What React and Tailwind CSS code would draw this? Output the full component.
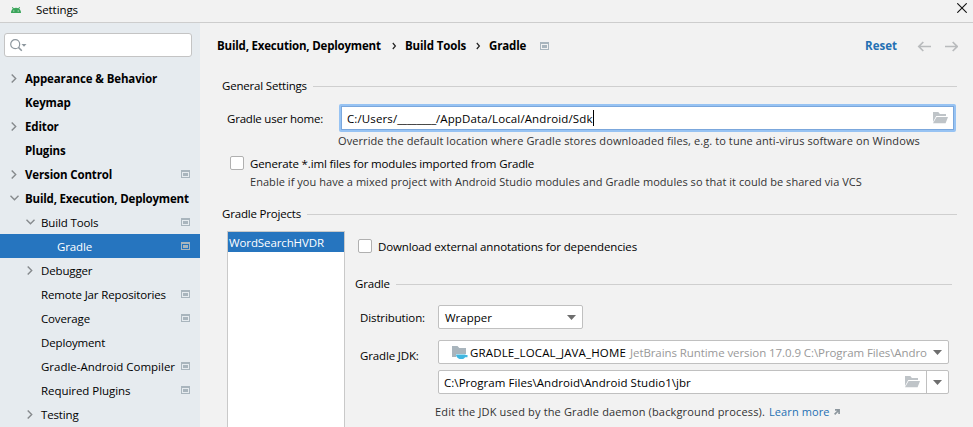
function ModuleIcon({ className = "" }) {
  return (
    <svg width="9" height="8" viewBox="0 0 9 8" shapeRendering="crispEdges" className={`shrink-0 ${className}`}>
      <path fillRule="evenodd" d="M0 0h9v8H0zM1 2v5h7V2z" fill="#a9b5bd" />
      <path d="M2 3h5v3H2z" fill="#a9b5bd" />
    </svg>
  );
}

function Chevron({ open, small }) {
  if (small) {
    return (
      <svg width="5" height="8" viewBox="0 0 5 8" fill="none" stroke="#222" strokeWidth="1.2">
        <path d="M.8 1l2.6 3L.8 7" />
      </svg>
    );
  }
  return open ? (
    <svg width="9" height="6" viewBox="0 0 9 6" fill="none" stroke="#868a8d" strokeWidth="1.4">
      <path d="M.5.7l4 4 4-4" />
    </svg>
  ) : (
    <svg width="6" height="9" viewBox="0 0 6 9" fill="none" stroke="#868a8d" strokeWidth="1.4" className="ml-px">
      <path d="M.7.5l4 4-4 4" />
    </svg>
  );
}

function FolderIcon() {
  return (
    <svg width="15" height="12" viewBox="0 0 15 12" fill="#bfc4c8" className="shrink-0">
      <path d="M0 0h5.3l1.6 2H13v2H3.2L0 10z" />
      <path d="M3.6 5H15l-2.4 6.3H0z" />
    </svg>
  );
}

function Caret() {
  return (
    <svg width="9" height="5" viewBox="0 0 9 5" fill="#6e6e6e" className="shrink-0">
      <path d="M0 0h9L4.5 5z" />
    </svg>
  );
}

function SectionTitle({ children }) {
  return (
    <div className="flex h-5 items-center gap-[6px]">
      <span className="shrink-0 tracking-[-0.19px]">{children}</span>
      <div className="h-px flex-1 bg-[#cfcfcf]" />
    </div>
  );
}

function Checkbox() {
  return <span className="size-[14px] shrink-0 rounded-[2px] border border-[#b0b0b0] bg-white" />;
}

const ITEMS = [
  { label: "Appearance & Behavior", level: 0, arrow: "closed", track: "tracking-[-0.125px]" },
  { label: "Keymap", level: 0 },
  { label: "Editor", level: 0, arrow: "closed" },
  { label: "Plugins", level: 0 },
  { label: "Version Control", level: 0, arrow: "closed", icon: true },
  { label: "Build, Execution, Deployment", level: 0, arrow: "open", track: "tracking-[-0.19px]" },
  { label: "Build Tools", level: 1, arrow: "open", icon: true },
  { label: "Gradle", level: 2, icon: true, selected: true },
  { label: "Debugger", level: 1, arrow: "closed" },
  { label: "Remote Jar Repositories", level: 1, icon: true },
  { label: "Coverage", level: 1, icon: true },
  { label: "Deployment", level: 1 },
  { label: "Gradle-Android Compiler", level: 1, icon: true, track: "tracking-[-0.01px]" },
  { label: "Required Plugins", level: 1, icon: true, track: "tracking-[-0.05px]" },
  { label: "Testing", level: 1, arrow: "closed" },
];

const INDENT = ["pl-[9px]", "pl-[25px]", "pl-[41px]"];

function Sidebar() {
  return (
    <aside className="w-[200px] shrink-0 overflow-hidden bg-[#e6ebef]">
      <div className="mt-[10px] ml-1 flex h-6 w-[188px] items-center rounded-[3px] border border-[#c4c4c4] bg-white pl-[5px]">
        <svg width="17" height="13" viewBox="0 0 17 13" fill="none" stroke="#8d979e" strokeWidth="1.2">
          <circle cx="5.2" cy="5.2" r="4.5" />
          <path d="M8.4 8.4l3.4 3.4" strokeWidth="1.5" />
          <path d="M11.5 5h5L14 7.8z" fill="#8d979e" stroke="none" />
        </svg>
      </div>
      <nav className="mt-[9px]">
        {ITEMS.map((it) => (
          <div
            key={it.label}
            className={`flex h-6 items-center pr-[10px] whitespace-nowrap ${INDENT[it.level]} ${it.level === 0 ? "font-bold" : ""} ${it.selected ? "bg-[#2675bf] text-white" : ""}`}
          >
            <span className="flex w-4 shrink-0 items-center pl-px">
              {it.arrow && <Chevron open={it.arrow === "open"} />}
            </span>
            <span className={`w-0 flex-1 pt-[2px] ${it.track || "tracking-[-0.145px]"}`}>{it.label}</span>
            {it.icon && <ModuleIcon />}
          </div>
        ))}
      </nav>
    </aside>
  );
}

function GradlePanel() {
  return (
    <div className="ml-[10px] flex-1">
      <div className="mt-[5px] ml-[3px] flex h-5 items-center gap-[6px]">
        <Checkbox />
        <span className="pt-px tracking-[-0.137px]">Download external annotations for dependencies</span>
      </div>
      <div className="mt-[18px] mr-[21px]">
        <SectionTitle>Gradle</SectionTitle>
      </div>
      <div className="mt-[11px] ml-[5px] flex h-6 items-center">
        <span className="w-[78px] pt-[2px] tracking-[-0.115px]">Distribution:</span>
        <div className="flex h-6 w-[145px] items-center justify-between rounded-[2px] border border-[#c0c0c0] bg-white pr-[6px] pl-[6px]">
          <span className="pt-[2px]">Wrapper</span>
          <Caret />
        </div>
      </div>
      <div className="mt-[11px] ml-[5px] flex h-6 items-center">
        <span className="w-[78px] pt-[7px] tracking-[-0.15px]">Gradle JDK:</span>
        <div className="flex h-6 w-[511px] items-center rounded-[2px] border border-[#c0c0c0] bg-white pl-[13px] whitespace-nowrap">
          <svg width="16" height="15" viewBox="0 0 16 15" className="shrink-0">
            <path d="M0 1h5.500l1.800 2H14v6H4v3H0z" fill="#a9b5bd" />
            <path d="M4 9.500h9.500v.5H15.500v2.200H13c-.6 1-1 1.300-2 1.800H7.500C5.500 13.300 4 11.500 4 9.500z" fill="#40b6e0" />
          </svg>
          <span className="ml-[2px] w-[160px] shrink-0 pt-px tracking-[0.15px]">GRADLE_LOCAL_JAVA_HOME</span>
          <span className="w-[303px] shrink-0 pt-px tracking-[-0.08px] text-[#999]">
            JetBrains Runtime version 17.0.9 C:\Program Files\Andro
          </span>
          <Caret />
        </div>
      </div>
      <div className="mt-[6px] ml-[83px] flex h-6 w-[511px] rounded-[2px] border border-[#c0c0c0] bg-white">
        <div className="flex flex-1 items-center justify-between pr-[6px] pl-[5px]">
          <span className="pt-[2px] tracking-[0.05px]">C:\Program Files\Android\Android Studio1\jbr</span>
          <FolderIcon />
        </div>
        <div className="flex w-[22px] items-center justify-center border-l border-[#c0c0c0]">
          <Caret />
        </div>
      </div>
      <div className="mt-[8px] ml-[80px] flex h-5 items-center text-[11px]">
        <span className="w-[334px] tracking-[0.15px] text-[#333]">
          Edit the JDK used by the Gradle daemon (background process).
        </span>
        <span className="tracking-[0.1px] text-[#2470b3]">Learn more</span>
        <svg width="6" height="6" viewBox="0 0 6 6" className="ml-1" fill="none" stroke="#8d979e" strokeWidth="1.700">
          <path d="M1 .9h4.100V5M5 1L.6 5.400" />
        </svg>
      </div>
    </div>
  );
}

function Main() {
  return (
    <main className="flex flex-1 flex-col">
      <div className="mt-[13px] mr-[15px] ml-[17px] flex h-5 items-center font-bold">
        <span className="w-[175px] tracking-[-0.19px]">Build, Execution, Deployment</span>
        <Chevron small />
        <span className="ml-[8px] w-[71px] tracking-[-0.145px]">Build Tools</span>
        <Chevron small />
        <span className="ml-2 w-[51px] tracking-[-0.145px]">Gradle</span>
        <ModuleIcon />
        <span className="ml-auto text-[#2470b3]">Reset</span>
        <svg width="41" height="11" viewBox="0 0 41 11" className="ml-5" fill="none" stroke="#b9bbbd" strokeWidth="1.700">
          <path d="M14 5.500H2M6.300 1L1.800 5.500l4.500 4.500M28 5.500h12M35.700 1l4.500 4.500-4.500 4.500" />
        </svg>
      </div>
      <div className="mt-5 mr-4 ml-[22px]">
        <SectionTitle>General Settings</SectionTitle>
      </div>
      <div className="mt-2 ml-[27px] flex h-7 items-center">
        <span className="w-[112px] pt-px tracking-[-0.21px]">Gradle user home:</span>
        <div className="h-7 w-[617px] rounded-[2px] bg-[#97c3f3] p-[2px]">
          <div className="flex h-6 items-center border border-[#7ba7dc] bg-white pr-[5px] pl-[5px]">
            <span className="pt-px tracking-[0.12px]">
              C:/Users/<span className="tracking-[-0.2px]">________</span>/AppData/Local/Android/Sdk
            </span>
            <span className="h-4 w-px bg-black" />
            <span className="ml-auto">
              <FolderIcon />
            </span>
          </div>
        </div>
      </div>
      <div className="ml-[138px] h-[18px] text-[11px] leading-[18px] tracking-[0.09px] whitespace-nowrap text-[#333]">
        Override the default location where Gradle stores downloaded files, e.g. to tune anti-virus software on Windows
      </div>
      <div className="mt-[3px] ml-[30px] flex h-5 items-center gap-[6px]">
        <Checkbox />
        <span className="pt-px tracking-[-0.15px]">Generate *.iml files for modules imported from Gradle</span>
      </div>
      <div className="ml-[50px] h-[18px] text-[11px] leading-[18px] tracking-[0.045px] whitespace-nowrap text-[#333]">
        Enable if you have a mixed project with Android Studio modules and Gradle modules so that it could be shared via VCS
      </div>
      <div className="mt-[13px] mr-4 ml-[22px]">
        <SectionTitle>Gradle Projects</SectionTitle>
      </div>
      <div className="mt-[7px] ml-[27px] flex flex-1">
        <div className="w-[118px] border border-b-0 border-[#c9c9c9] bg-white">
          <div className="flex h-5 items-center bg-[#2675bf] pt-px pl-px tracking-[-0.11px] text-white">WordSearchHVDR</div>
        </div>
        <GradlePanel />
      </div>
    </main>
  );
}

export default function App() {
  return (
    <div className="flex h-[427px] w-[973px] flex-col overflow-hidden bg-[#f2f2f2] font-['Open_Sans','Noto_Sans',sans-serif] text-[11.5px] leading-[18px] text-black">
      <header className="flex h-[23px] shrink-0 items-center border-b border-[#cdcdcd] pr-[6px] pb-[3px] pl-[11px]">
        <svg width="10" height="6" viewBox="0 0 10 6" fill="#3ba55b">
          <path
            fillRule="evenodd"
            d="M0 6C0 4 .7 2.600 1.800 1.800L.9.2 1.700 0l1 1.300a6 6 0 014.600 0L8.300 0l.8.2-.9 1.600C9.300 2.600 10 4 10 6zM2.300 3.500v1h1v-1zM6.700 3.500v1h1v-1z"
          />
        </svg>
        <span className="ml-[15px] tracking-[-0.08px]">Settings</span>
        <svg width="10" height="10" viewBox="0 0 10 10" className="mt-[-3px] ml-auto" stroke="#111" strokeWidth="1.100">
          <path d="M.3.3l9.400 9.400M9.700.3L.3 9.700" />
        </svg>
      </header>
      <div className="flex flex-1">
        <Sidebar />
        <Main />
      </div>
    </div>
  );
}
